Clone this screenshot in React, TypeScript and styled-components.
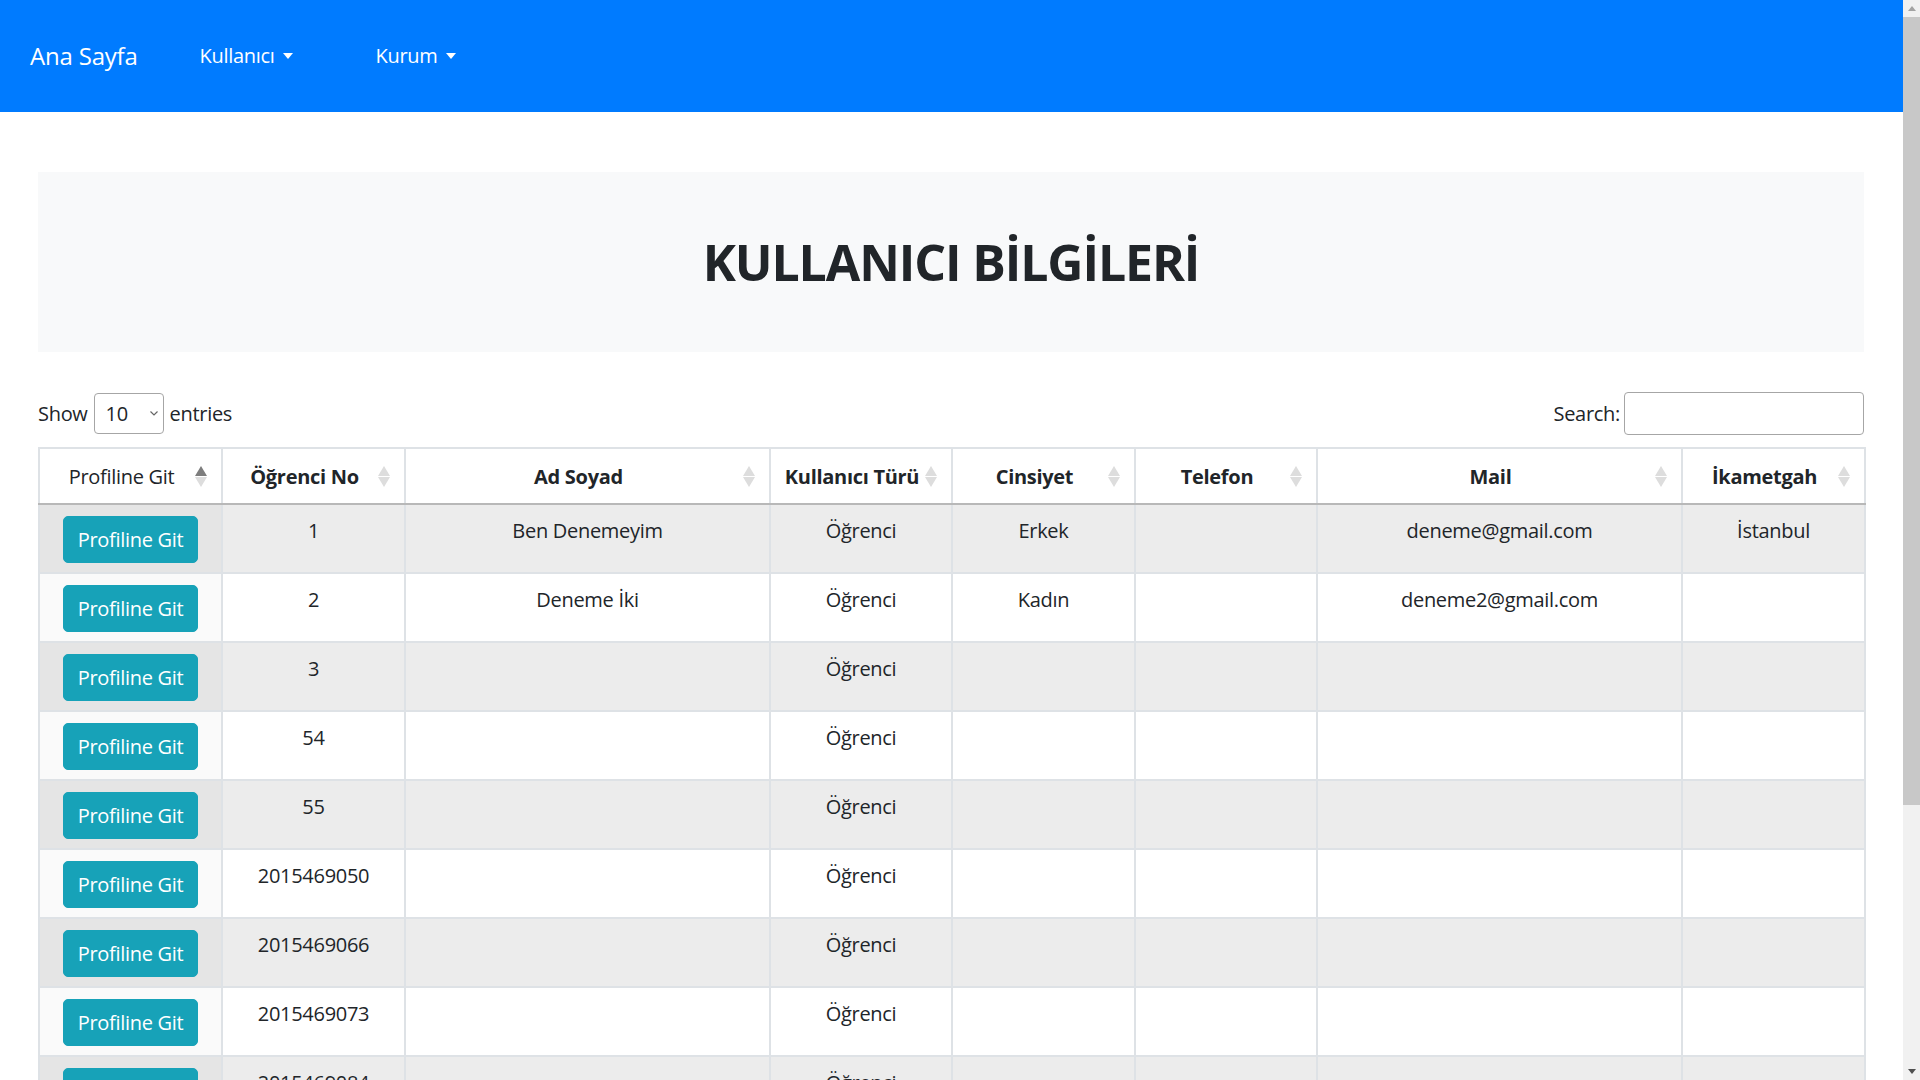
import React from "react";
import styled, { createGlobalStyle } from "styled-components";

const GlobalStyle = createGlobalStyle`
  html, body {
    margin: 0;
    padding: 0;
    height: 100%;
    overflow: hidden;
  }
  body {
    font-family: "Open Sans", "Noto Sans", "Liberation Sans", sans-serif;
    font-size: 20px;
    line-height: 1.5;
    letter-spacing: -0.3px;
    color: #212529;
    background: #fff;
  }
  *, *::before, *::after { box-sizing: border-box; }
`;

const Shell = styled.div`
  display: flex;
  width: 100vw;
  height: 100vh;
  overflow: hidden;
`;

const Viewport = styled.div`
  flex: 1;
  min-width: 0;
  overflow: hidden;
`;

const Scrollbar = styled.div`
  flex: none;
  width: 17px;
  background: #f1f1f1;
  display: flex;
  flex-direction: column;
`;

const ScrollArrow = styled.div<{ $active?: boolean }>`
  height: 17px;
  display: flex;
  align-items: center;
  justify-content: center;
  color: ${(p) => (p.$active ? "#505050" : "#a3a3a3")};
`;

const ScrollThumb = styled.div`
  height: 788px;
  background: #c8c8c8;
`;

const ScrollRest = styled.div`
  flex: 1;
`;

const Navbar = styled.nav`
  height: 112px;
  background: #007bff;
  display: flex;
  align-items: center;
  padding: 0 30px;
`;

const Brand = styled.a`
  color: #fff;
  font-size: 24px;
  letter-spacing: -0.2px;
  text-decoration: none;
  margin-right: 62px;
`;

const NavMenu = styled.div`
  display: flex;
  align-items: center;
  gap: 83px;
`;

const NavLink = styled.a`
  display: flex;
  align-items: center;
  color: #fff;
  font-size: 20px;
  text-decoration: none;
`;

const Caret = styled.span`
  margin-left: 8px;
  width: 0;
  height: 0;
  border-top: 6px solid currentColor;
  border-left: 5px solid transparent;
  border-right: 5px solid transparent;
`;

const Main = styled.main`
  padding: 60px 39px 0 38px;
`;

const Jumbotron = styled.header`
  height: 180px;
  background: #f8f9fa;
  display: flex;
  align-items: center;
  justify-content: center;
`;

const Title = styled.h1`
  margin: 0;
  font-size: 50px;
  font-weight: 700;
  line-height: 1.2;
  letter-spacing: -1.1px;
`;

const Controls = styled.div`
  margin-top: 40px;
  height: 43px;
  display: flex;
  align-items: center;
  justify-content: space-between;
`;

const InlineLabel = styled.label`
  display: flex;
  align-items: center;
  gap: 6px;
`;

const SelectWrap = styled.span`
  position: relative;
  display: inline-flex;
`;

const Select = styled.select`
  appearance: none;
  width: 70px;
  height: 41px;
  padding: 0 0 0 11px;
  border: 1px solid #a6a6a6;
  border-radius: 4px;
  background: #fff;
  color: #212529;
  font: inherit;
  font-size: 20px;
  letter-spacing: inherit;
`;

const SelectChevron = styled.svg`
  position: absolute;
  right: 6px;
  top: 18px;
  width: 8px;
  height: 5px;
  pointer-events: none;
`;

const SearchInput = styled.input`
  width: 240px;
  height: 43px;
  margin-left: -2px;
  border: 1px solid #a6a6a6;
  border-radius: 4px;
  font: inherit;
  padding: 0 8px;
`;

const Table = styled.table`
  margin-top: 12px;
  width: 1826px;
  border-collapse: collapse;
  table-layout: fixed;
`;

const Th = styled.th<{ $bold?: boolean }>`
  position: relative;
  padding: 13px 30px 11px 12px;
  text-align: center;
  font-weight: ${(p) => (p.$bold ? 700 : 400)};
  border: 2px solid #dee2e6;
  border-bottom-color: #b8b8b8;
  background: #fff;
  white-space: nowrap;
`;

const SortIcon = styled.svg`
  position: absolute;
  right: 14px;
  top: 50%;
  margin-top: -10px;
  width: 12px;
  height: 21px;
`;

const Row = styled.tr<{ $odd: boolean }>`
  background: ${(p) => (p.$odd ? "#ececec" : "#fff")};
`;

const Td = styled.td<{ $sorted?: boolean; $odd: boolean }>`
  padding: 11px 12px 9px;
  border: 2px solid #dee2e6;
  text-align: center;
  vertical-align: top;
  background: ${(p) => (p.$sorted ? (p.$odd ? "#e5e5e5" : "#fafafa") : "transparent")};
`;

const ProfileButton = styled.button`
  display: block;
  margin: 0 auto;
  height: 47px;
  padding: 0 14px;
  border: 1px solid #17a2b8;
  border-radius: 5px;
  background: #17a2b8;
  color: #fff;
  font: inherit;
  font-size: 20px;
  letter-spacing: inherit;
  line-height: 30px;
  cursor: pointer;
`;

type Column = { label: string; width: number; bold: boolean; active?: boolean };

const columns: Column[] = [
  { label: "Profiline Git", width: 183, bold: false, active: true },
  { label: "Öğrenci No", width: 183, bold: true },
  { label: "Ad Soyad", width: 365, bold: true },
  { label: "Kullanıcı Türü", width: 182, bold: true },
  { label: "Cinsiyet", width: 183, bold: true },
  { label: "Telefon", width: 182, bold: true },
  { label: "Mail", width: 365, bold: true },
  { label: "İkametgah", width: 183, bold: true },
];

type Student = {
  no: string;
  name: string;
  type: string;
  gender: string;
  phone: string;
  mail: string;
  city: string;
};

const students: Student[] = [
  { no: "1", name: "Ben Denemeyim", type: "Öğrenci", gender: "Erkek", phone: "", mail: "deneme@gmail.com", city: "İstanbul" },
  { no: "2", name: "Deneme İki", type: "Öğrenci", gender: "Kadın", phone: "", mail: "deneme2@gmail.com", city: "" },
  { no: "3", name: "", type: "Öğrenci", gender: "", phone: "", mail: "", city: "" },
  { no: "54", name: "", type: "Öğrenci", gender: "", phone: "", mail: "", city: "" },
  { no: "55", name: "", type: "Öğrenci", gender: "", phone: "", mail: "", city: "" },
  { no: "2015469050", name: "", type: "Öğrenci", gender: "", phone: "", mail: "", city: "" },
  { no: "2015469066", name: "", type: "Öğrenci", gender: "", phone: "", mail: "", city: "" },
  { no: "2015469073", name: "", type: "Öğrenci", gender: "", phone: "", mail: "", city: "" },
  { no: "2015469084", name: "", type: "Öğrenci", gender: "", phone: "", mail: "", city: "" },
];

const SortArrows: React.FC<{ active?: boolean }> = ({ active }) => (
  <SortIcon viewBox="0 0 12 21" aria-hidden="true">
    <polygon points="6,0 12,10 0,10" fill={active ? "#7d7d7d" : "#dddddd"} />
    <polygon points="0,11 12,11 6,21" fill="#dddddd" />
  </SortIcon>
);

export default function App() {
  return (
    <>
      <GlobalStyle />
      <Shell>
        <Viewport>
          <Navbar>
            <Brand href="#">Ana Sayfa</Brand>
            <NavMenu>
              <NavLink href="#">
                Kullanıcı
                <Caret />
              </NavLink>
              <NavLink href="#">
                Kurum
                <Caret />
              </NavLink>
            </NavMenu>
          </Navbar>
          <Main>
            <Jumbotron>
              <Title>KULLANICI BİLGİLERİ</Title>
            </Jumbotron>
            <Controls>
              <InlineLabel>
                Show
                <SelectWrap>
                  <Select defaultValue="10">
                    <option value="10">10</option>
                    <option value="25">25</option>
                    <option value="50">50</option>
                    <option value="100">100</option>
                  </Select>
                  <SelectChevron viewBox="0 0 8 5" aria-hidden="true">
                    <polyline points="0.5,0.5 4,4 7.5,0.5" fill="none" stroke="#666" strokeWidth="1.2" />
                  </SelectChevron>
                </SelectWrap>
                entries
              </InlineLabel>
              <InlineLabel>
                Search:
                <SearchInput type="search" />
              </InlineLabel>
            </Controls>
            <Table>
              <colgroup>
                {columns.map((c) => (
                  <col key={c.label} style={{ width: c.width }} />
                ))}
              </colgroup>
              <thead>
                <tr>
                  {columns.map((c) => (
                    <Th key={c.label} $bold={c.bold}>
                      {c.label}
                      <SortArrows active={c.active} />
                    </Th>
                  ))}
                </tr>
              </thead>
              <tbody>
                {students.map((s, i) => {
                  const odd = i % 2 === 0;
                  return (
                    <Row key={s.no} $odd={odd}>
                      <Td $sorted $odd={odd}>
                        <ProfileButton>Profiline Git</ProfileButton>
                      </Td>
                      <Td $odd={odd}>{s.no}</Td>
                      <Td $odd={odd}>{s.name}</Td>
                      <Td $odd={odd}>{s.type}</Td>
                      <Td $odd={odd}>{s.gender}</Td>
                      <Td $odd={odd}>{s.phone}</Td>
                      <Td $odd={odd}>{s.mail}</Td>
                      <Td $odd={odd}>{s.city}</Td>
                    </Row>
                  );
                })}
              </tbody>
            </Table>
          </Main>
        </Viewport>
        <Scrollbar>
          <ScrollArrow>
            <svg width="8" height="5" viewBox="0 0 8 5" aria-hidden="true">
              <polygon points="4,0 8,5 0,5" fill="currentColor" />
            </svg>
          </ScrollArrow>
          <ScrollThumb />
          <ScrollRest />
          <ScrollArrow $active>
            <svg width="8" height="5" viewBox="0 0 8 5" aria-hidden="true">
              <polygon points="0,0 8,0 4,5" fill="currentColor" />
            </svg>
          </ScrollArrow>
        </Scrollbar>
      </Shell>
    </>
  );
}
